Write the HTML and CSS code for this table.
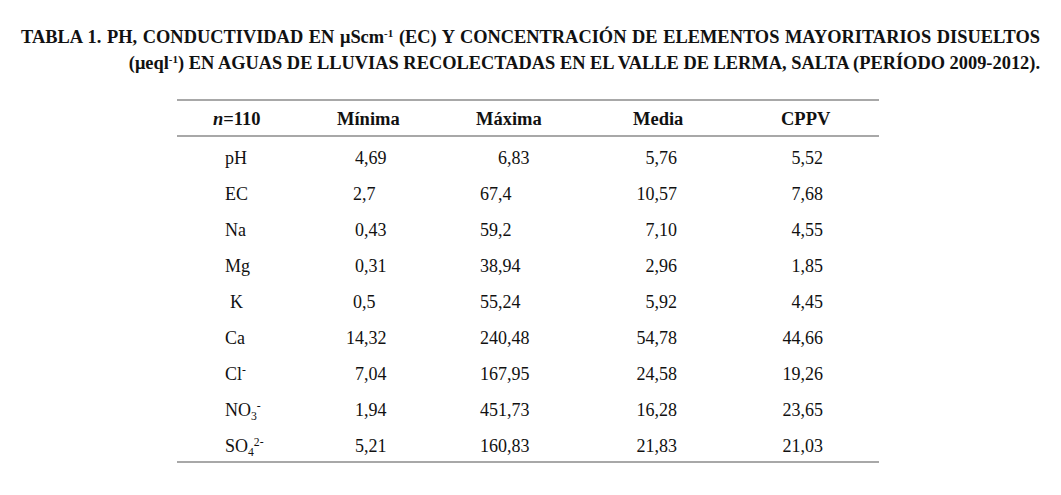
FILE: index.html
```html
<!DOCTYPE html>
<html lang="es">
<head>
<meta charset="utf-8">
<title>Tabla 1</title>
<link rel="stylesheet" href="styles.css">
</head>
<body>
<h1 class="title"><span class="line first">TABLA 1. PH, CONDUCTIVIDAD EN μScm<sup>-1</sup> (EC) Y CONCENTRACIÓN DE ELEMENTOS MAYORITARIOS DISUELTOS</span> <span class="line second">(μeql<sup>-1</sup>) EN AGUAS DE LLUVIAS RECOLECTADAS EN EL VALLE DE LERMA, SALTA (PERÍODO 2009-2012).</span></h1>
<table class="data">
  <colgroup>
    <col class="c1"><col class="c2"><col class="c3"><col class="c4"><col class="c5">
  </colgroup>
  <thead>
    <tr>
      <th class="h1"><i>n</i>=110</th>
      <th class="h2">Mínima</th>
      <th class="h3">Máxima</th>
      <th class="h4">Media</th>
      <th class="h5">CPPV</th>
    </tr>
  </thead>
  <tbody>
    <tr><td class="lab">pH</td><td class="min">4,69</td><td class="max ind">6,83</td><td class="med">5,76</td><td class="cp">5,52</td></tr>
    <tr><td class="lab">EC</td><td class="min short">2,7</td><td class="max">67,4</td><td class="med">10,57</td><td class="cp">7,68</td></tr>
    <tr><td class="lab">Na</td><td class="min">0,43</td><td class="max">59,2</td><td class="med">7,10</td><td class="cp">4,55</td></tr>
    <tr><td class="lab">Mg</td><td class="min">0,31</td><td class="max">38,94</td><td class="med">2,96</td><td class="cp">1,85</td></tr>
    <tr><td class="lab ind">K</td><td class="min short">0,5</td><td class="max">55,24</td><td class="med">5,92</td><td class="cp">4,45</td></tr>
    <tr><td class="lab">Ca</td><td class="min wide">14,32</td><td class="max">240,48</td><td class="med">54,78</td><td class="cp">44,66</td></tr>
    <tr><td class="lab">Cl<sup>-</sup></td><td class="min">7,04</td><td class="max">167,95</td><td class="med">24,58</td><td class="cp">19,26</td></tr>
    <tr><td class="lab">NO<sub>3</sub><sup>-</sup></td><td class="min">1,94</td><td class="max">451,73</td><td class="med">16,28</td><td class="cp">23,65</td></tr>
    <tr><td class="lab">SO<sub>4</sub><sup>2-</sup></td><td class="min">5,21</td><td class="max">160,83</td><td class="med">21,83</td><td class="cp">21,03</td></tr>
  </tbody>
</table>
</body>
</html>
```
FILE: styles.css
```css
html, body {
  margin: 0;
  padding: 0;
  background: #ffffff;
  color: #111111;
  font-family: "Liberation Serif", "Times New Roman", serif;
}

.title {
  width: 1019px;
  margin: 0;
  padding: 24px 0 0 21px;
  font-size: 18.4px;
  line-height: 26px;
  font-weight: bold;
}

.title .line {
  display: block;
  white-space: nowrap;
}

.title .first {
  text-align: justify;
  text-align-last: justify;
}

.title .second {
  text-align: right;
}

.title sup {
  font-size: 0.6em;
  line-height: 0;
  vertical-align: 0.5em;
}

.data {
  margin: 23px 0 0 177px;
  width: 702px;
  border-collapse: collapse;
  table-layout: fixed;
  font-size: 18px;
  border-top: 2px solid #a8a8a8;
  border-bottom: 2px solid #a8a8a8;
}

.c1 { width: 150px; }
.c2 { width: 130px; }
.c3 { width: 130px; }
.c4 { width: 140px; }
.c5 { width: 152px; }

.data thead tr {
  border-bottom: 2px solid #a8a8a8;
}

.data th {
  padding: 2px 0 0 0;
  line-height: 32px;
  font-size: 18.5px;
  font-weight: bold;
  text-align: left;
  white-space: nowrap;
}

.h1 { padding-left: 36px !important; }
.h2 { padding-left: 10px !important; }
.h3 { padding-left: 19px !important; }
.h4 { padding-left: 46px !important; }
.h5 { padding-left: 54px !important; }

.data td {
  padding: 6px 0 0 0;
  line-height: 30px;
  white-space: nowrap;
}

.lab { text-align: left; padding-left: 48px !important; }
.lab.ind { padding-left: 53px !important; }

.min { text-align: left; padding-left: 28px !important; }
.min.short { padding-left: 26px !important; }
.min.wide { padding-left: 19px !important; }

.max { text-align: left; padding-left: 23px !important; }
.max.ind { padding-left: 41px !important; }

.med { text-align: right; padding-right: 50px !important; }
.cp { text-align: right; padding-right: 56px !important; }

.data sup, .data sub {
  font-size: 0.65em;
  line-height: 0;
}
.data sup { vertical-align: 0.55em; }
.data sub { vertical-align: -0.3em; }
```
